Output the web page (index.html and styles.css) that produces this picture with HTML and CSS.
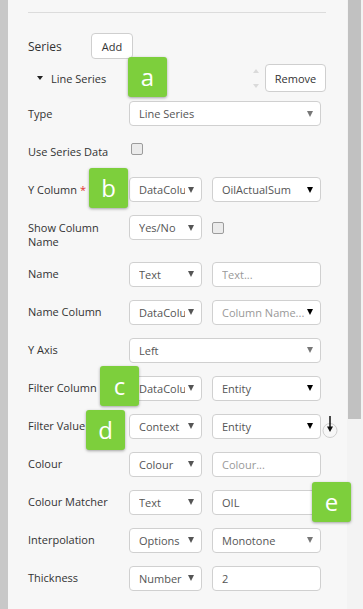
FILE: index.html
```html
<!DOCTYPE html>
<html>
<head>
<meta charset="utf-8">
<link rel="stylesheet" href="styles.css">
</head>
<body>
<div class="page">
  <div class="gutter"></div>
  <div class="panel">
    <div class="rule"></div>
    <div class="series-head">
      <span class="series-title">Series</span>
      <span class="btn btn-add">Add</span>
    </div>
    <div class="series-item">
      <span class="caret"></span>
      <span class="item-name">Line Series</span>
      <span class="spinner"><span class="up"></span><span class="down"></span></span>
      <span class="btn btn-remove">Remove</span>
    </div>
    <div class="form">
      <div class="row">
        <div class="label">Type</div>
        <div class="controls"><div class="select w-full"><span>Line Series</span><i class="arrow gray"></i></div></div>
      </div>
      <div class="row">
        <div class="label">Use Series Data</div>
        <div class="controls"><span class="check first"></span></div>
      </div>
      <div class="row">
        <div class="label">Y Column <span class="req">*</span></div>
        <div class="controls">
          <div class="select w-small"><span>DataColu</span><i class="arrow"></i></div>
          <div class="select w-med"><span>OilActualSum</span><i class="arrow dark"></i></div>
        </div>
      </div>
      <div class="row">
        <div class="label">Show Column<br>Name</div>
        <div class="controls">
          <div class="select w-small"><span>Yes/No</span><i class="arrow"></i></div>
          <span class="check"></span>
        </div>
      </div>
      <div class="row">
        <div class="label">Name</div>
        <div class="controls">
          <div class="select w-small"><span>Text</span><i class="arrow"></i></div>
          <div class="select w-med"><span class="ph">Text...</span></div>
        </div>
      </div>
      <div class="row">
        <div class="label">Name Column</div>
        <div class="controls">
          <div class="select w-small"><span>DataColu</span><i class="arrow"></i></div>
          <div class="select w-med"><span class="ph">Column Name...</span><i class="arrow dark"></i></div>
        </div>
      </div>
      <div class="row">
        <div class="label">Y Axis</div>
        <div class="controls"><div class="select w-full"><span>Left</span><i class="arrow gray"></i></div></div>
      </div>
      <div class="row">
        <div class="label">Filter Column</div>
        <div class="controls">
          <div class="select w-small"><span>DataColu</span><i class="arrow"></i></div>
          <div class="select w-med"><span>Entity</span><i class="arrow dark"></i></div>
        </div>
      </div>
      <div class="row">
        <div class="label">Filter Value</div>
        <div class="controls">
          <div class="select w-small"><span>Context</span><i class="arrow"></i></div>
          <div class="select w-med"><span>Entity</span><i class="arrow dark"></i></div>
          <svg class="down-icon" width="16" height="25" viewBox="0 0 16 25">
            <circle cx="8" cy="16.5" r="7" fill="none" stroke="#cfcfcf" stroke-width="1"/>
            <line x1="8" y1="2" x2="8" y2="14" stroke="#111" stroke-width="1.5"/>
            <polygon points="5,12.5 11,12.5 8,18" fill="#111"/>
          </svg>
        </div>
      </div>
      <div class="row">
        <div class="label">Colour</div>
        <div class="controls">
          <div class="select w-small"><span>Colour</span><i class="arrow"></i></div>
          <div class="select w-med"><span class="ph">Colour...</span></div>
        </div>
      </div>
      <div class="row">
        <div class="label">Colour Matcher</div>
        <div class="controls">
          <div class="select w-small"><span>Text</span><i class="arrow"></i></div>
          <div class="select w-med"><span>OIL</span></div>
        </div>
      </div>
      <div class="row">
        <div class="label">Interpolation</div>
        <div class="controls">
          <div class="select w-small"><span>Options</span><i class="arrow"></i></div>
          <div class="select w-med"><span>Monotone</span><i class="arrow gray"></i></div>
        </div>
      </div>
      <div class="row">
        <div class="label">Thickness</div>
        <div class="controls">
          <div class="select w-small"><span>Number</span><i class="arrow"></i></div>
          <div class="select w-med"><span>2</span></div>
        </div>
      </div>
    </div>
    <div class="badge badge-a">a</div>
    <div class="badge badge-b">b</div>
    <div class="badge badge-c">c</div>
    <div class="badge badge-d">d</div>
    <div class="badge badge-e">e</div>
  </div>
  <div class="scrollbar"><div class="thumb"></div></div>
</div>
</body>
</html>
```
FILE: styles.css
```css
* { box-sizing: border-box; }
html, body { margin: 0; padding: 0; }
body {
  font-family: "Open Sans", "Noto Sans", sans-serif;
  font-size: 11px;
  color: #333;
  background: #f7f7f7;
}
.page {
  display: flex;
  height: 609px;
  overflow: hidden;
}
.gutter {
  width: 8px;
  flex: none;
  background: #c8c8c8;
}
.panel {
  position: relative;
  width: 339px;
  flex: none;
  background: #f7f7f7;
  padding: 12px 21px 0 20px;
}
.scrollbar {
  width: 16px;
  flex: none;
  background: #f3f3f3;
  padding-left: 1px;
}
.thumb {
  width: 13px;
  height: 419px;
  background: #c1c1c1;
}
.rule {
  border-top: 1px solid #dcdcdc;
}
.series-head {
  display: flex;
  align-items: center;
  margin-top: 20px;
  height: 26px;
}
.series-title {
  width: 63px;
  font-size: 12px;
  color: #333;
}
.btn {
  display: inline-flex;
  align-items: center;
  justify-content: center;
  background: #fff;
  border: 1px solid #cfcfcf;
  border-radius: 4px;
  color: #333;
  font-size: 11px;
}
.btn-add { width: 42px; height: 26px; }
.btn-remove { width: 61px; height: 28px; }
.series-item {
  display: flex;
  align-items: center;
  height: 28px;
  margin-top: 5px;
  padding-left: 9px;
}
.caret {
  width: 0; height: 0;
  border-left: 3.5px solid transparent;
  border-right: 3.5px solid transparent;
  border-top: 4px solid #222;
  margin-right: 8px;
}
.item-name { font-size: 11px; color: #333; }
.spinner {
  margin-left: auto;
  margin-right: 6px;
  display: flex;
  flex-direction: column;
  gap: 11px;
}
.spinner .up {
  width: 0; height: 0;
  border-left: 3.5px solid transparent;
  border-right: 3.5px solid transparent;
  border-bottom: 4px solid #dadada;
}
.spinner .down {
  width: 0; height: 0;
  border-left: 3.5px solid transparent;
  border-right: 3.5px solid transparent;
  border-top: 4px solid #dadada;
}
.form { margin-top: 9px; }
.row {
  display: flex;
  align-items: flex-start;
  margin-bottom: 13px;
}
.label {
  width: 101px;
  flex: none;
  padding-top: 5.5px;
  line-height: 14px;
  color: #333;
}
.req { color: #e03030; }
.controls {
  display: flex;
  align-items: center;
  gap: 10px;
  min-height: 25px;
}
.select {
  height: 25px;
  background: #fff;
  border: 1px solid #d0d0d0;
  border-radius: 4px;
  display: flex;
  align-items: center;
  padding: 0 7px 0 9px;
  font-size: 11px;
  color: #555;
  white-space: nowrap;
  overflow: hidden;
}
.select span { flex: 1; overflow: hidden; }
.select .ph { color: #999; }
.w-full { width: 192px; }
.w-small { width: 73px; }
.w-med { width: 109px; }
.arrow {
  flex: none;
  width: 0; height: 0;
  border-left: 3.5px solid transparent;
  border-right: 3.5px solid transparent;
  border-top: 6px solid #555;
  margin-left: 3px;
}
.arrow.gray { border-top-color: #777; }
.arrow.dark { border-top-color: #000; }
.check {
  width: 12px;
  height: 12px;
  border: 1px solid #9c9c9c;
  border-radius: 2px;
  background: #ebebeb;
}
.check.first { margin-left: 2px; margin-top: -5px; }
.down-icon { margin-left: -9px; }
.badge {
  position: absolute;
  width: 39px;
  height: 40px;
  background: #7dcf3c;
  border-radius: 3px;
  box-shadow: 0 1px 3px rgba(0,0,0,0.35);
  color: #fff;
  font-size: 24px;
  display: flex;
  align-items: center;
  justify-content: center;
  z-index: 2;
  padding-bottom: 2px;
}
.badge-a { left: 120px; top: 57px; }
.badge-b { left: 81px; top: 168px; }
.badge-c { left: 92px; top: 366px; }
.badge-d { left: 78px; top: 410px; }
.badge-e { left: 304px; top: 482px; }
```
